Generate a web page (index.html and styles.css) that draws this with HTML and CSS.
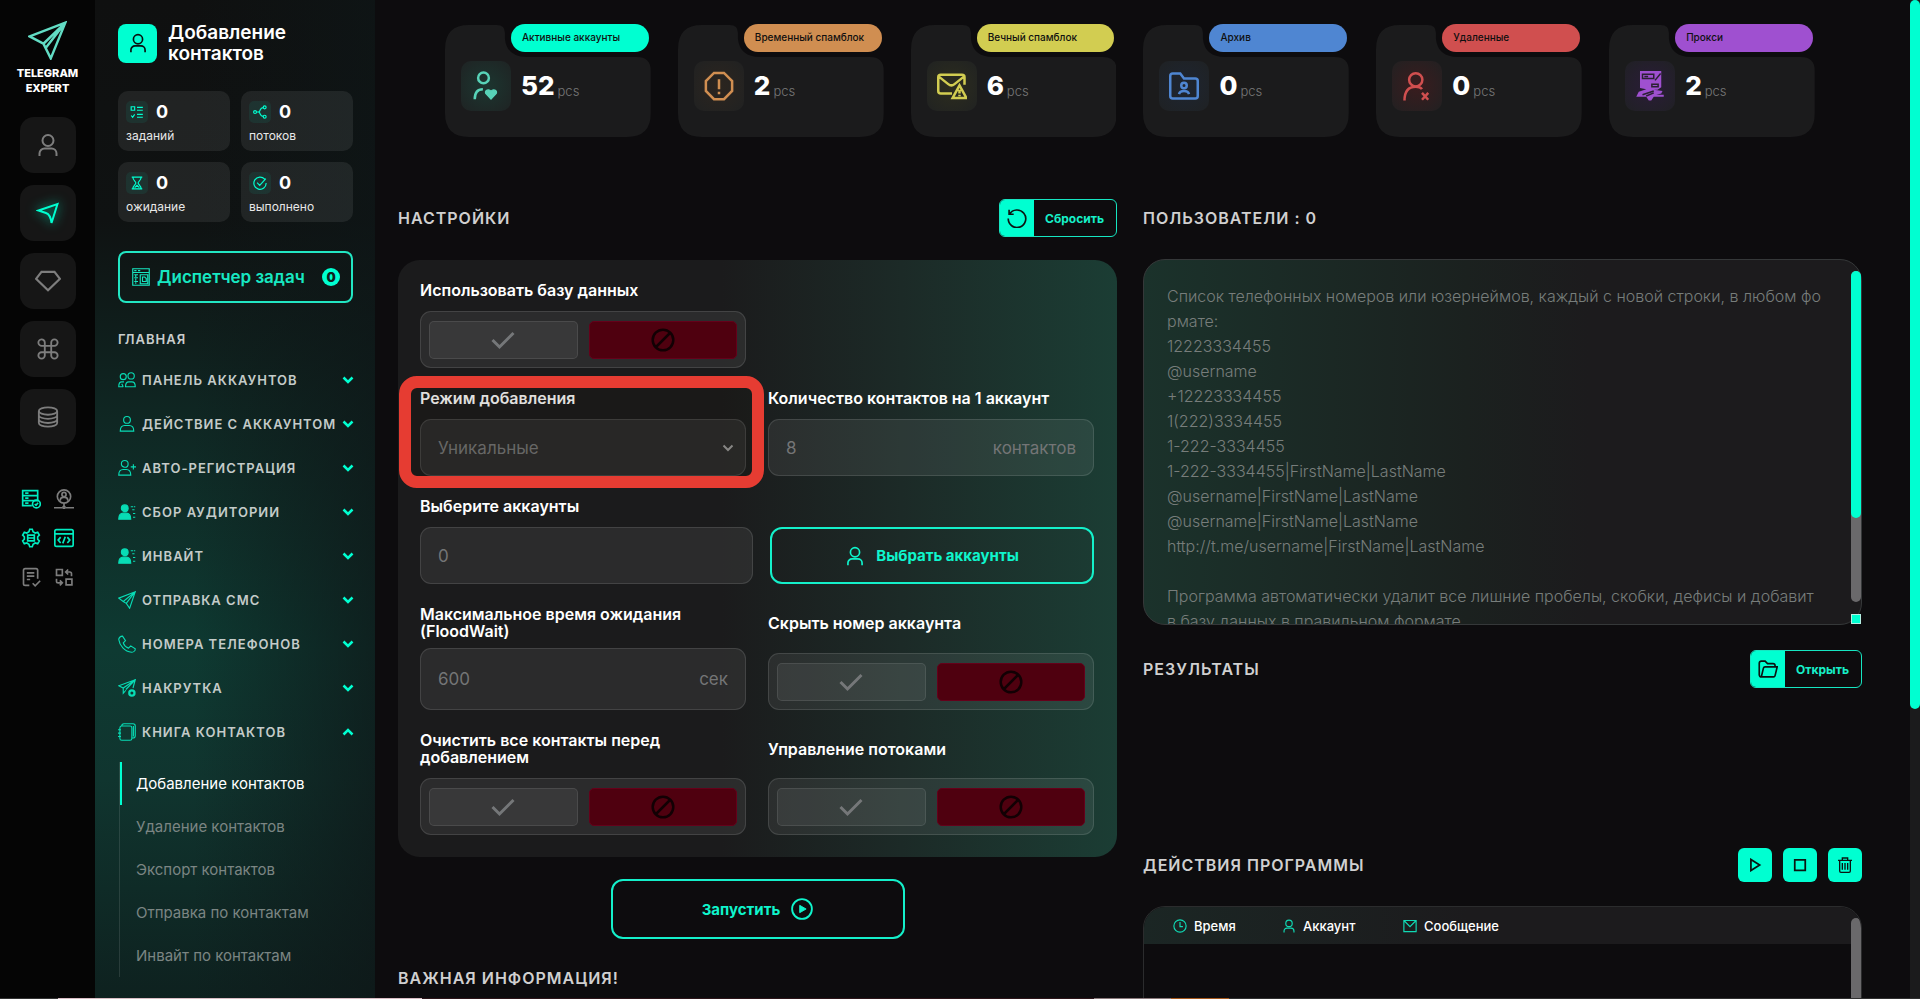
FILE: index.html
```html
<!DOCTYPE html>
<html lang="ru">
<head>
<meta charset="utf-8">
<title>Telegram Expert — Добавление контактов</title>
<link rel="stylesheet" href="styles.css">
</head>
<body>
<svg class="sprite" aria-hidden="true">
  <symbol id="user" viewBox="0 0 24 24"><circle cx="12" cy="7.5" r="5.5"/><path d="M3.5 23v-2.5a5 5 0 0 1 5-5h7a5 5 0 0 1 5 5V23"/></symbol>
  <symbol id="arrow" viewBox="0 0 24 24"><path d="M21.500 3 15.500 22q-1-8.500-5.500-10T2.500 9.500z"/></symbol>
  <symbol id="logo" viewBox="0 0 24 24"><path d="M23 1 1 9.500l8.500 4.500L14 23z M9.500 14 23 1 11 16.500"/></symbol>
  <symbol id="paper" viewBox="0 0 24 24"><path d="M23 1 1 9.500l6 4.500L23 1 15.500 23 11 16.500 23 1M11 16.500 7 14"/></symbol>
  <symbol id="gem" viewBox="0 0 24 24"><path d="M6 3.500h12l5 6.500-11 10.500L1 10z"/></symbol>
  <symbol id="cmd" viewBox="0 0 24 24"><path d="M8.500 8.500h7v7h-7zM8.500 8.500H5.500a3.500 3.500 0 1 1 3-3.500zM15.500 8.500V5a3.500 3.500 0 1 1 3.500 3.500zM8.500 15.500V19A3.500 3.500 0 1 1 5 15.500zM15.500 15.500H19a3.500 3.500 0 1 1-3.500 3.500z"/></symbol>
  <symbol id="db" viewBox="0 0 24 24"><ellipse cx="12" cy="5.500" rx="10" ry="4"/><path d="M2 5.500v13c0 2.200 4.500 4 10 4s10-1.800 10-4v-13M2 10c0 2.200 4.500 4 10 4s10-1.800 10-4M2 14.500c0 2.200 4.500 4 10 4s10-1.800 10-4"/></symbol>
  <symbol id="server" viewBox="0 0 24 24"><path d="M2 2h18v6H2zM2 8h18v6H2zM13 20H2v-6h12M5 5h4M5 11h4M5 17h4"/><circle cx="18.500" cy="18" r="4.700"/><path d="m16.500 18 1.500 1.500 2.500-3"/></symbol>
  <symbol id="proxy" viewBox="0 0 24 24"><circle cx="12" cy="9" r="8"/><circle cx="12" cy="6.500" r="2.500"/><path d="M7.500 14v-1a3.500 3.500 0 0 1 3.500-3h2a3.500 3.500 0 0 1 3.500 3v1M12 17v4M0 22.500h10M14 22.500h10"/><circle cx="12" cy="22" r="1.300"/></symbol>
  <symbol id="gear" viewBox="0 0 24 24"><path d="m9.500 4.500 1-3h3l1 3 2.500 1.500 3-.8 2 3.300-2 2v3l2 2-2 3.300-3-.8-2.500 1.500-1 3h-3l-1-3L7 18l-3 .8-2-3.300 2-2v-3l-2-2 2-3.300 3 .8zM8 8.500h8v3.500H8zM8 12h8v3.500H8z"/></symbol>
  <symbol id="code" viewBox="0 0 24 24"><rect x="1" y="2" width="22" height="20" rx="2"/><path d="M1 7h22M8 11l-3 3.500L8 18M16 11l3 3.500L16 18M13.500 10.500l-3 8"/></symbol>
  <symbol id="doccheck" viewBox="0 0 24 24"><path d="M10 22H5a2 2 0 0 1-2-2V4a2 2 0 0 1 2-2h13a2 2 0 0 1 2 2v10M7 7h9M7 11h9M7 15h4M14 19.500l3 3 6-6"/></symbol>
  <symbol id="swap" viewBox="0 0 24 24"><path d="M3 3h7v7H3zM14.500 14.500h7v7h-7zM14 6h5a2 2 0 0 1 2 2v3M17 3l-3 3 3 3M10 19H5a2 2 0 0 1-2-2v-3M7 16l3 3-3 3"/></symbol>
  <symbol id="tasks" viewBox="0 0 24 24"><path d="M2 3h6v6H2zM12 4h10M12 9h10M12 16h10M12 21h10M2 18l2.500 3L8 16"/></symbol>
  <symbol id="nodes" viewBox="0 0 24 24"><circle cx="3.500" cy="12" r="2.500"/><circle cx="20" cy="4" r="2.500"/><circle cx="20" cy="20" r="2.500"/><path d="M6 12h4M17.500 4.500C11 5 14 9 10 12c4 3 1 7 7.500 7.500"/></symbol>
  <symbol id="glass" viewBox="0 0 24 24"><path d="M3 2h18M3 22h18M5 2c0 6 5 7 5 10s-5 4-5 10M19 2c0 6-5 7-5 10s5 4 5 10M8 20l4-4 4 4"/></symbol>
  <symbol id="okring" viewBox="0 0 24 24"><path d="M20 5.500A10.500 10.500 0 1 0 22.500 12M7 11.500l4.500 4.500L22 4.500"/></symbol>
  <symbol id="board" viewBox="0 0 24 24"><path d="M1 1h22v22H1zM1 6h22M3 3.500h3M8 3.500h3M11 9h10v12H11zM14 12v6h5v-4l-2-2zM3 9h5M5 9v3M3 13h5M5 14v3M3 18h5M5 19v2"/></symbol>
  <symbol id="users" viewBox="0 0 24 24"><circle cx="7" cy="7.500" r="4"/><circle cx="17.500" cy="6.500" r="4.200"/><path d="M8 14.500H5C2 14.500 1 17 1 21h6M10 21c0-4 1-6.500 4.500-6.500h4c3.500 0 4.500 2.500 4.500 6.500zM5 17l2 4"/></symbol>
  <symbol id="person" viewBox="0 0 24 24"><circle cx="12" cy="6.500" r="4.500"/><path d="M3 21.500c0-5 2-7.500 6-7.500h6c4 0 6 2.500 6 7.500z"/></symbol>
  <symbol id="personadd" viewBox="0 0 24 24"><circle cx="9" cy="6.500" r="4.500"/><path d="M1 21.500C1 16.500 3 14 7 14h4c4 0 6 2.500 6 7.500zM20.500 7v7M17 10.500h7"/></symbol>
  <symbol id="personlist" viewBox="0 0 24 24"><g fill="currentColor"><circle cx="9" cy="7" r="4.500"/><path d="M1 21.500C1 16.500 3 13.500 7 13.500h4c4 0 6 3 6 8z"/></g><path d="M17 5h6M19 9h4M20 14h3M20 19h3" stroke-dasharray="3 1"/></symbol>
  <symbol id="phone" viewBox="0 0 24 24"><path d="m6 1.500 4 6-3 3c1 3 4 6 7 7l3-3 6 4c0 3-3 4.500-5 4.500C9 22 2 14 1 6c0-2 2-4.500 5-4.500z"/></symbol>
  <symbol id="boost" viewBox="0 0 24 24"><path d="M23 1 1 9l6 3L23 1l-3 11M7 12v7l3.500-4M7 12 23 1 10.500 14"/><circle cx="18.500" cy="18.500" r="3.500" stroke-width="3"/></symbol>
  <symbol id="book" viewBox="0 0 24 24"><rect x="2.500" y="4" width="16" height="19" rx="2.500"/><path d="M5 4c0-2 1-3 3-3h12c2 0 3 1 3 3v13c0 2-1 3-3 3h-1.500M0 9h4M0 13.500h4M0 18h4M20.500 4v14"/></symbol>
  <symbol id="down" viewBox="0 0 24 24"><path d="m3 7 9 9 9-9"/></symbol>
  <symbol id="up" viewBox="0 0 24 24"><path d="m3 17 9-9 9 9"/></symbol>
  <symbol id="heartuser" viewBox="0 0 24 24"><circle cx="10" cy="5.500" r="4.300"/><path d="M3 22.500c0-5 2-8 6.500-8"/><path fill="currentColor" stroke-width="1" d="M16 22.500 11.800 18c-1-2.500 2.500-4 4.200-1.800 1.700-2.200 5.200-.7 4.200 1.800z"/></symbol>
  <symbol id="warn" viewBox="0 0 24 24"><path d="M8 1.500h8L22.500 8v8L16 22.500H8L1.500 16V8zM12 6.500v8M12 16.500v2"/></symbol>
  <symbol id="mailwarn" viewBox="0 0 24 24"><path d="M12 18H3a2 2 0 0 1-2-2V5a2 2 0 0 1 2-2h17a2 2 0 0 1 2 2v6M1.500 4.500 9 10.500c1.500 1.200 3.500 1.200 5 0l7.500-6M18 11.500l5.500 10h-11zM18 15v3M18 19v1.200"/></symbol>
  <symbol id="folderuser" viewBox="0 0 24 24"><path d="M1 4a2 2 0 0 1 2-2h6l3 4h9a2 2 0 0 1 2 2v12a2 2 0 0 1-2 2H3a2 2 0 0 1-2-2z"/><circle cx="12" cy="11.500" r="2.200"/><path d="M8 18.500c.500-2 2-2.500 4-2.500s3.500.500 4 2.500"/></symbol>
  <symbol id="userx" viewBox="0 0 24 24"><circle cx="11" cy="7" r="5.300"/><path d="M2 23.500c0-7 3-11 9-11 2 0 4 .500 5 2M16 17.500l5 5.500M21 17.500 16 23"/></symbol>
  <symbol id="proxies" viewBox="0 0 24 24"><path fill="currentColor" stroke="none" d="M4 0h17v13l-3 2h-3l7 1-1 2-4 1h6v1.500h-8l-2 3h-2l-2-3H1l2-4 6-2-5-1z"/><path stroke="#2a2033" stroke-width="1.200" d="M20.500 2 16 7.500M6 2.500h9v3.500H6zM7.500 4.300h3M13.500 10.500h5v2h-5zM6 19l9-3M9 20l6-2.500"/></symbol>
  <symbol id="check" viewBox="0 0 24 24"><path d="m1.500 12 7 7L22.500 5"/></symbol>
  <symbol id="ban" viewBox="0 0 24 24"><circle cx="12" cy="12" r="10.300"/><path d="M19.500 4.500l-15 15"/></symbol>
  <symbol id="reset" viewBox="0 0 24 24"><path d="M2.500 2v5.500H8M3 7.500A10.500 10.500 0 1 1 1.500 12.500"/></symbol>
  <symbol id="folder" viewBox="0 0 24 24"><path d="M4 21.500A2.500 2.500 0 0 1 1.500 19V5A2.500 2.500 0 0 1 4 2.500h4.500l3 3H18A2.500 2.500 0 0 1 20.500 8v1.500M4 21.500h14.500a2 2 0 0 0 2-1.500L23 9.500H8.500a2 2 0 0 0-2 1.500L4 21.500"/></symbol>
  <symbol id="start" viewBox="0 0 24 24"><circle cx="12" cy="12" r="10.800"/><path fill="currentColor" stroke-width="1" d="M9.500 8v8l7-4z"/></symbol>
  <symbol id="play" viewBox="0 0 24 24"><path d="M5 2.500v19L20 12z"/></symbol>
  <symbol id="stop" viewBox="0 0 24 24"><path d="M3 3h18v18H3z"/></symbol>
  <symbol id="trash" viewBox="0 0 24 24"><path d="M1.500 5h21M8 4V1.500h8V4M4 5.500V21a2 2 0 0 0 2 2h12a2 2 0 0 0 2-2V5.500M8 9v10M12 9v10M16 9v10"/></symbol>
  <symbol id="clock" viewBox="0 0 24 24"><circle cx="12" cy="12" r="10.500"/><path d="M12 5v8h5"/></symbol>
  <symbol id="mail" viewBox="0 0 24 24"><path d="M1.500 2.500h21v19h-21zM2 3l10 10L22 3"/></symbol>
  <symbol id="cardshape" viewBox="0 0 206 112"><path fill="#1b1b1c" stroke="none" d="M24 0H52Q60 0 60 8V14Q62 32 82 32H192Q206 32 206 46V88Q206 112 182 112H24Q0 112 0 88V24Q0 0 24 0z"/></symbol>
</svg>

<div class="app">
  <aside class="rail">
    <a class="logo" href="#"><svg class="i"><use href="#logo"/></svg><span>TELEGRAM<br>EXPERT</span></a>
    <nav class="rail-nav">
      <button class="tile" aria-label="Аккаунт"><svg class="i i24"><use href="#user"/></svg></button>
      <button class="tile on" aria-label="Рассылка"><svg class="i i24"><use href="#arrow"/></svg></button>
      <button class="tile" aria-label="Премиум"><svg class="i i26"><use href="#gem"/></svg></button>
      <button class="tile" aria-label="Команды"><svg class="i i22"><use href="#cmd"/></svg></button>
      <button class="tile" aria-label="База данных"><svg class="i i22"><use href="#db"/></svg></button>
    </nav>
    <div class="tools">
      <button class="on" aria-label="Сервер"><svg class="i i20"><use href="#server"/></svg></button>
      <button aria-label="Прокси"><svg class="i i20"><use href="#proxy"/></svg></button>
      <button class="on" aria-label="Настройки"><svg class="i i20"><use href="#gear"/></svg></button>
      <button class="on" aria-label="Код"><svg class="i i20"><use href="#code"/></svg></button>
      <button aria-label="Журнал"><svg class="i i20"><use href="#doccheck"/></svg></button>
      <button aria-label="Обмен"><svg class="i i20"><use href="#swap"/></svg></button>
    </div>
  </aside>

  <aside class="side">
    <header class="side-head">
      <span class="side-icon"><svg class="i i20"><use href="#user"/></svg></span>
      <h1>Добавление контактов</h1>
    </header>
    <div class="counters">
      <div class="counter"><span class="mini"><svg class="i"><use href="#tasks"/></svg></span><b>0</b><small>заданий</small></div>
      <div class="counter"><span class="mini"><svg class="i"><use href="#nodes"/></svg></span><b>0</b><small>потоков</small></div>
      <div class="counter"><span class="mini"><svg class="i"><use href="#glass"/></svg></span><b>0</b><small>ожидание</small></div>
      <div class="counter"><span class="mini"><svg class="i"><use href="#okring"/></svg></span><b>0</b><small>выполнено</small></div>
    </div>
    <button class="manager"><svg class="i i18"><use href="#board"/></svg><span>Диспетчер задач</span><b>0</b></button>
    <h2 class="side-title">ГЛАВНАЯ</h2>
    <nav class="menu">
      <button><svg class="i i18"><use href="#users"/></svg><span>ПАНЕЛЬ АККАУНТОВ</span><svg class="i chev"><use href="#down"/></svg></button>
      <button><svg class="i i18"><use href="#person"/></svg><span>ДЕЙСТВИЕ С АККАУНТОМ</span><svg class="i chev"><use href="#down"/></svg></button>
      <button><svg class="i i18"><use href="#personadd"/></svg><span>АВТО-РЕГИСТРАЦИЯ</span><svg class="i chev"><use href="#down"/></svg></button>
      <button><svg class="i i18"><use href="#personlist"/></svg><span>СБОР АУДИТОРИИ</span><svg class="i chev"><use href="#down"/></svg></button>
      <button><svg class="i i18"><use href="#personlist"/></svg><span>ИНВАЙТ</span><svg class="i chev"><use href="#down"/></svg></button>
      <button><svg class="i i18"><use href="#paper"/></svg><span>ОТПРАВКА СМС</span><svg class="i chev"><use href="#down"/></svg></button>
      <button><svg class="i i18"><use href="#phone"/></svg><span>НОМЕРА ТЕЛЕФОНОВ</span><svg class="i chev"><use href="#down"/></svg></button>
      <button><svg class="i i18"><use href="#boost"/></svg><span>НАКРУТКА</span><svg class="i chev"><use href="#down"/></svg></button>
      <button><svg class="i i18"><use href="#book"/></svg><span>КНИГА КОНТАКТОВ</span><svg class="i chev"><use href="#up"/></svg></button>
    </nav>
    <nav class="submenu">
      <a class="on" href="#">Добавление контактов</a>
      <a href="#">Удаление контактов</a>
      <a href="#">Экспорт контактов</a>
      <a href="#">Отправка по контактам</a>
      <a href="#">Инвайт по контактам</a>
    </nav>
  </aside>

  <main class="main">
    <section class="cards">
      <article class="card mint"><svg class="shape" viewBox="0 0 206 112"><use href="#cardshape"/></svg><span class="pill">Активные аккаунты</span><span class="badge"><svg class="i"><use href="#heartuser"/></svg></span><b>52</b><small>pcs</small></article>
      <article class="card orange"><svg class="shape" viewBox="0 0 206 112"><use href="#cardshape"/></svg><span class="pill">Временный спамблок</span><span class="badge"><svg class="i"><use href="#warn"/></svg></span><b>2</b><small>pcs</small></article>
      <article class="card yellow"><svg class="shape" viewBox="0 0 206 112"><use href="#cardshape"/></svg><span class="pill">Вечный спамблок</span><span class="badge"><svg class="i"><use href="#mailwarn"/></svg></span><b>6</b><small>pcs</small></article>
      <article class="card blue"><svg class="shape" viewBox="0 0 206 112"><use href="#cardshape"/></svg><span class="pill">Архив</span><span class="badge"><svg class="i"><use href="#folderuser"/></svg></span><b>0</b><small>pcs</small></article>
      <article class="card red"><svg class="shape" viewBox="0 0 206 112"><use href="#cardshape"/></svg><span class="pill">Удаленные</span><span class="badge"><svg class="i"><use href="#userx"/></svg></span><b>0</b><small>pcs</small></article>
      <article class="card purple"><svg class="shape" viewBox="0 0 206 112"><use href="#cardshape"/></svg><span class="pill">Прокси</span><span class="badge"><svg class="i"><use href="#proxies"/></svg></span><b>2</b><small>pcs</small></article>
    </section>

    <div class="columns">
      <section class="col">
        <header class="row-head"><h2>НАСТРОЙКИ</h2>
          <button class="split"><span><svg class="i i20"><use href="#reset"/></svg></span>Сбросить</button></header>
        <form class="panel">
          <div class="field"><span class="label">Использовать базу данных</span>
            <div class="toggle" role="radiogroup" aria-label="Использовать базу данных">
              <label class="yes"><input type="radio" name="base" aria-label="Да"><svg class="i"><use href="#check"/></svg></label>
              <label class="no"><input type="radio" name="base" aria-label="Нет" checked><svg class="i"><use href="#ban"/></svg></label>
            </div></div>
          <div class="field"></div>
          <div class="field marked"><label class="label" for="mode">Режим добавления</label>
            <div class="box select"><select id="mode"><option>Уникальные</option></select><svg class="i"><use href="#down"/></svg></div></div>
          <div class="field"><label class="label" for="count">Количество контактов на 1 аккаунт</label>
            <div class="box"><input id="count" type="text" value="8"><span>контактов</span></div></div>
          <div class="field wide"><label class="label" for="accs">Выберите аккаунты</label>
            <div class="pair"><div class="box"><input id="accs" type="text" value="0"></div>
            <button type="button" class="outline"><svg class="i i20"><use href="#user"/></svg>Выбрать аккаунты</button></div></div>
          <div class="field tight"><label class="label" for="wait">Максимальное время ожидания (FloodWait)</label>
            <div class="box tall"><input id="wait" type="text" value="600"><span>сек</span></div></div>
          <div class="field"><span class="label">Скрыть номер аккаунта</span>
            <div class="toggle" role="radiogroup" aria-label="Скрыть номер аккаунта">
              <label class="yes"><input type="radio" name="hide" aria-label="Да"><svg class="i"><use href="#check"/></svg></label>
              <label class="no"><input type="radio" name="hide" aria-label="Нет" checked><svg class="i"><use href="#ban"/></svg></label>
            </div></div>
          <div class="field"><span class="label">Очистить все контакты перед добавлением</span>
            <div class="toggle" role="radiogroup" aria-label="Очистить все контакты перед добавлением">
              <label class="yes"><input type="radio" name="clear" aria-label="Да"><svg class="i"><use href="#check"/></svg></label>
              <label class="no"><input type="radio" name="clear" aria-label="Нет" checked><svg class="i"><use href="#ban"/></svg></label>
            </div></div>
          <div class="field"><span class="label">Управление потоками</span>
            <div class="toggle" role="radiogroup" aria-label="Управление потоками">
              <label class="yes"><input type="radio" name="threads" aria-label="Да"><svg class="i"><use href="#check"/></svg></label>
              <label class="no"><input type="radio" name="threads" aria-label="Нет" checked><svg class="i"><use href="#ban"/></svg></label>
            </div></div>
        </form>
        <button class="outline run">Запустить<svg class="i i22"><use href="#start"/></svg></button>
        <h2>ВАЖНАЯ ИНФОРМАЦИЯ!</h2>
      </section>

      <section class="col">
        <header class="row-head"><h2 id="users-title">ПОЛЬЗОВАТЕЛИ : 0</h2></header>
        <div class="list">
          <textarea aria-labelledby="users-title" spellcheck="false">Список телефонных номеров или юзернеймов, каждый с новой строки, в любом фо
рмате:
12223334455
@username
+12223334455
1(222)3334455
1-222-3334455
1-222-3334455|FirstName|LastName
@username|FirstName|LastName
@username|FirstName|LastName
http://t.me/username|FirstName|LastName

Программа автоматически удалит все лишние пробелы, скобки, дефисы и добавит
в базу данных в правильном формате.</textarea>
          <div class="bar"><i></i></div>
          <div class="grip"></div>
        </div>
        <header class="row-head results"><h2>РЕЗУЛЬТАТЫ</h2>
          <button class="split"><span><svg class="i i20"><use href="#folder"/></svg></span>Открыть</button></header>
        <header class="row-head actions"><h2>ДЕЙСТВИЯ ПРОГРАММЫ</h2>
          <div class="buttons">
            <button aria-label="Старт"><svg class="i"><use href="#play"/></svg></button>
            <button aria-label="Стоп"><svg class="i"><use href="#stop"/></svg></button>
            <button aria-label="Удалить"><svg class="i i16"><use href="#trash"/></svg></button>
          </div></header>
        <div class="log">
          <table><thead><tr>
            <th><svg class="i"><use href="#clock"/></svg>Время</th>
            <th><svg class="i"><use href="#user"/></svg>Аккаунт</th>
            <th><svg class="i"><use href="#mail"/></svg>Сообщение</th>
          </tr></thead></table>
          <div class="bar"></div>
        </div>
      </section>
    </div>
  </main>
  <div class="page-scroll"><i></i></div>
</div>
<div class="bottom-line"></div>
</body>
</html>
```

FILE: styles.css
```css
:root {
  --mint: #00ffd1;
  --bg: #0d0d0e;
  --muted: #747576;
}
* { box-sizing: border-box; }
body {
  margin: 0;
  height: 100vh;
  overflow: hidden;
  background: var(--bg);
  color: #fff;
  font-family: Inter, "Open Sans", "Liberation Sans", sans-serif;
  font-size: 16px;
}
button, input, select, textarea { font: inherit; color: inherit; margin: 0; }
button { background: none; border: 0; padding: 0; cursor: pointer; }
h1, h2 { margin: 0; }
a { color: inherit; text-decoration: none; }
.sprite { position: absolute; width: 0; height: 0; }

.i { width: 14px; height: 14px; flex: none; fill: none; stroke: currentColor; stroke-width: 2; }
.i16 { width: 16px; height: 16px; }
.i18 { width: 18px; height: 18px; stroke-width: 1.5; }
.i20 { width: 20px; height: 20px; }
.i22 { width: 22px; height: 22px; }
.i24 { width: 24px; height: 24px; }
.i26 { width: 26px; height: 26px; }

.app { display: flex; height: 100vh; overflow: hidden; }

/* icon rail */
.rail { flex: none; width: 95px; background: #050505; display: flex; flex-direction: column; align-items: center; padding-top: 21px; }
.logo { display: flex; flex-direction: column; align-items: center; gap: 6px; font-size: 11px; line-height: 15px; font-weight: 800; text-align: center; }
.logo .i { width: 39px; height: 39px; stroke-width: 1.5; color: #62dcc4; }
.rail-nav { display: grid; gap: 12px; margin-top: 21px; }
.tile { width: 56px; height: 56px; border-radius: 14px; background: #161616; color: #7d7d7d; display: grid; place-items: center; }
.tile.on { color: var(--mint); }
.tile.on .i { filter: drop-shadow(0 0 6px #00c8a4); }
.tools { display: grid; grid-template-columns: 20px 20px; gap: 19px 13px; margin-top: 44px; color: #7d7d7d; }
.tools button { height: 20px; }
.tools .on { color: #00ecc1; }

/* side menu */
.side {
  flex: none; width: 280px; padding: 22px 22px 0 23px;
  background:
    linear-gradient(90deg, transparent 35%, #0e1617b0 100%),
    linear-gradient(180deg, #0f1010 0, #0f1212 22%, #0f2723 42%, #0e3a32 65%, #10352f 78%, #0e211f 100%);
}
.side-head { display: flex; align-items: center; gap: 11px; }
.side-icon { flex: none; width: 39px; height: 39px; border-radius: 8px; background: var(--mint); color: #08110f; display: grid; place-items: center; }
.side h1 { font-size: 19px; line-height: 21px; font-weight: 600; }
.counters { display: grid; grid-template-columns: 1fr 1fr; gap: 11px; margin-top: 27px; }
.counter { display: grid; grid-template-columns: 22px 1fr; column-gap: 8px; align-items: center; height: 60px; padding: 7px 8px 5px; border-radius: 10px; background: #ffffff14; }
.mini { width: 22px; height: 22px; border-radius: 5px; background: #00ffd112; color: var(--mint); display: grid; place-items: center; }
.counter b { font-size: 18px; line-height: 24px; }
.counter small { grid-column: 1 / 3; font-size: 12px; line-height: 16px; color: #e8e8e8; }
.manager { display: flex; align-items: center; gap: 7px; width: 100%; height: 52px; margin-top: 29px; padding: 0 11px 0 12px; border: 2px solid #22e6c3; border-radius: 8px; color: #17e8c2; font-size: 17px; font-weight: 600; white-space: nowrap; }
.manager b { margin-left: auto; width: 18px; height: 18px; border-radius: 9px; background: var(--mint); color: #10201c; font-size: 13px; line-height: 18px; }
.side-title { margin-top: 28px; font-size: 13px; line-height: 16px; letter-spacing: 1px; font-weight: 600; color: #c9cdcc; }
.menu { display: grid; margin-top: 11px; }
.menu button { display: flex; align-items: center; gap: 6px; height: 44px; text-align: left; font-size: 13px; letter-spacing: 1px; font-weight: 600; color: #c4cbc9; white-space: nowrap; }
.menu .i { color: #08dcb5; }
.menu .chev { width: 12px; margin-left: auto; color: var(--mint); stroke-width: 5; }
.submenu { display: grid; margin: 8px 0 0 1px; border-left: 1px solid #ffffff1c; }
.submenu a { height: 43px; line-height: 43px; padding-left: 14px; border-left: 2px solid transparent; font-size: 15px; color: #7b8583; }
.submenu .on { border-color: var(--mint); color: #fff; }

/* main area */
.main { flex: 1; min-width: 0; padding: 25px 48px 0 23px; background: #0d0c0e; }
.cards { display: grid; grid-template-columns: repeat(6, 1fr); gap: 27px; padding: 0 47px; margin-bottom: 62px; }
.card { position: relative; display: flex; align-items: center; height: 112px; padding: 9px 0 0 16px; }
.card > * { position: relative; }
.card .shape { position: absolute; left: 0; top: 0; width: 100%; height: 112px; }
.card .pill { position: absolute; left: 66px; right: 2px; top: -1px; height: 28px; padding-left: 11px; border-radius: 14px; background: var(--tone); color: #101010; font-size: 10px; line-height: 26px; font-weight: 500; white-space: nowrap; }
.badge { width: 50px; height: 50px; border-radius: 10px; background: radial-gradient(var(--shade), #1f2122 110%); color: var(--tone); display: grid; place-items: center; }
.badge .i { width: 30px; height: 30px; }
.card b { margin-left: 10px; font-size: 26px; line-height: 32px; font-weight: 800; }
.card small { margin-left: 3px; padding-top: 10px; font-size: 13px; font-weight: 300; color: #777; }
.mint { --tone: #00ffd1; --shade: #1c3630; }
.mint .badge { color: #58d3b8; }
.orange { --tone: #d08e51; --shade: #2c251f; }
.yellow { --tone: #d2cd51; --shade: #2d2d1e; }
.blue { --tone: #4f86d2; --shade: #1e2531; }
.red { --tone: #d04f4f; --shade: #3a1c1e; }
.purple { --tone: #9f50d0; --shade: #2a1c38; }

.columns { display: grid; grid-template-columns: 1fr 1fr; gap: 26px; }
.col { min-width: 0; }
.row-head { display: flex; align-items: center; justify-content: space-between; height: 38px; margin-bottom: 23px; }
.col h2 { font-size: 16px; line-height: 20px; font-weight: 600; letter-spacing: 1px; color: #d0d0d0; }
.split { display: flex; align-items: center; height: 38px; padding-right: 12px; gap: 11px; border: 1px solid #16e6c1; border-radius: 6px; color: #16f0c9; font-size: 12px; font-weight: 700; overflow: hidden; }
.split span { width: 34px; height: 38px; background: var(--mint); color: #0b1412; display: grid; place-items: center; }

.panel { position: relative; display: grid; grid-template-columns: 1fr 1fr; gap: 22px; padding: 22px 23px 22px 22px; border-radius: 22px; background: linear-gradient(90deg, #1b1b1c 0 45%, #1c2a27 70%, #1b3d34 100%); }
.field { display: flex; flex-direction: column; gap: 12px; min-width: 0; }
.tight { gap: 8px; }
.label { flex: 1; display: flex; align-items: center; font-size: 16px; line-height: 17px; font-weight: 600; }
.wide { grid-column: 1 / 3; }
.box, .toggle { display: flex; align-items: center; height: 57px; border: 1px solid #ffffff1e; border-radius: 11px; background: #ffffff12; }
.box { padding: 0 17px; color: var(--muted); font-size: 17px; }
.box input, .box select { flex: 1; min-width: 0; width: 100%; background: none; border: 0; padding: 0; outline: 0; appearance: none; }
.box.tall { height: 62px; }
.box.select { padding-right: 11px; }
.box .i { width: 12px; height: 12px; stroke-width: 4; color: #999; }
.toggle { gap: 11px; padding: 8px; }
.toggle label { flex: 1; height: 38px; border-radius: 5px; display: grid; place-items: center; }
.toggle input { position: absolute; opacity: 0; pointer-events: none; }
.toggle .i { width: 24px; height: 24px; stroke-width: 3; }
.toggle .no .i { stroke-width: 2.5; }
.yes { background: #ffffff10; border: 1px solid #ffffff18; color: #757779; }
.no { background: #4f000f; border: 1px solid #65001a; color: #120004; }
.marked { position: relative; }
.marked::after { content: ""; position: absolute; inset: -14px -18px -12px -21px; border: 12px solid #e63c32; border-radius: 18px; background: #1a120022; pointer-events: none; }
.pair { display: grid; grid-template-columns: 333fr 324fr; gap: 17px; }
.outline { display: flex; align-items: center; justify-content: center; gap: 11px; border: 2px solid #14f0ca; border-radius: 12px; color: #0ff5cc; font-size: 15px; font-weight: 700; }
.run { width: 294px; height: 60px; margin: 22px auto 29px; }

.list { position: relative; height: 366px; border: 1px solid #353839; border-radius: 22px; background: linear-gradient(90deg, #1b322b 0, #1b211f 45%, #1c1b1d 62%); margin: -1px 0 25px; }
.list textarea { display: block; width: 100%; height: 100%; padding: 24px 30px 0 23px; border: 0; background: none; outline: 0; resize: none; overflow: hidden; white-space: pre; color: #777d7b; font-size: 16px; line-height: 25px; font-weight: 300; }
.bar { position: absolute; right: 0; top: 11px; width: 10px; height: 331px; border-radius: 5px; background: #6a696b; }
.bar i { display: block; height: 247px; border-radius: 5px; background: var(--mint); }
.grip { position: absolute; right: 0; bottom: 0; width: 10px; height: 10px; background: var(--mint); border: 1px solid #b4efe3; }
.results { margin-bottom: 158px; }
.buttons { display: flex; gap: 11px; }
.buttons button { width: 34px; height: 34px; border-radius: 6px; background: var(--mint); color: #0a1411; display: grid; place-items: center; }
.buttons .i { stroke-width: 3; }
.buttons .i16 { stroke-width: 2; }
.actions { margin-bottom: 22px; }
.log { position: relative; height: 200px; border: 1px solid #2b2c2d; border-radius: 22px 22px 0 0; overflow: hidden; }
.log table { width: 100%; border-collapse: collapse; background: linear-gradient(90deg, #1b2624 0, #1c1b1d 45%); }
.log th { width: 121px; height: 37px; padding: 0 0 0 17px; text-align: left; font-size: 13px; font-weight: 500; }
.log th:first-child { padding-left: 29px; }
.log th:last-child { width: auto; }
.log th .i { margin-right: 7px; vertical-align: -2px; color: #10d9b4; }

.page-scroll { flex: none; width: 10px; background: #1b1b1c; }
.page-scroll i { display: block; height: 71vh; border-radius: 5px; background: var(--mint); }
.bottom-line { position: absolute; left: 0; right: 0; bottom: 0; height: 1px; background: linear-gradient(90deg, #333 0 3%, #d9bdc4 3% 22%, #2c1519 22% 57%, #8a7a7c 57% 61%, #a5581c 61% 64%, #303030 64%); }
```
